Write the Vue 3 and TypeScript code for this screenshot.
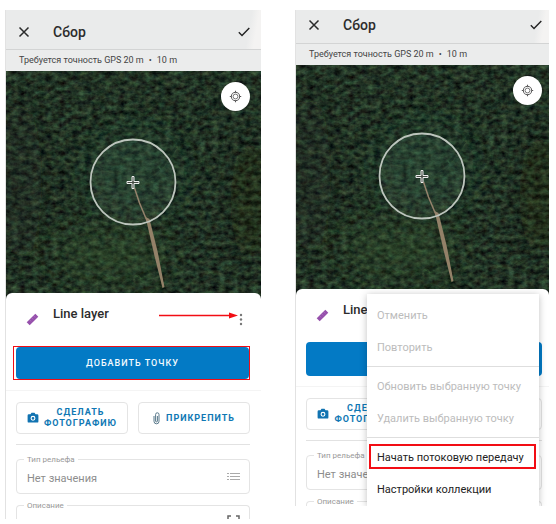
<script setup lang="ts">
interface MenuItem {
  text: string
  disabled?: boolean
  marked?: boolean
}
interface Screen {
  id: string
  hint: boolean
  menu: MenuItem[][]
}

const screens: Screen[] = [
  { id: 'add', hint: true, menu: [] },
  {
    id: 'stream',
    hint: false,
    menu: [
      [
        { text: 'Отменить', disabled: true },
        { text: 'Повторить', disabled: true },
      ],
      [
        { text: 'Обновить выбранную точку', disabled: true },
        { text: 'Удалить выбранную точку', disabled: true },
      ],
      [{ text: 'Начать потоковую передачу', marked: true }, { text: 'Настройки коллекции' }],
    ],
  },
]
</script>

<template>
  <main class="page">
    <section v-for="s in screens" :key="s.id" class="phone" :class="s.id">
      <header class="bar">
        <button class="icon-btn" type="button" aria-label="Закрыть">
          <svg width="12" height="12" viewBox="0 0 12 12"><path d="M1.500 1.500l9 9M10.500 1.500l-9 9" stroke="#2b2b2b" stroke-width="1.500" fill="none" /></svg>
        </button>
        <h1>Сбор</h1>
        <button class="icon-btn done" type="button" aria-label="Готово">
          <svg width="12" height="10" viewBox="0 0 12 10"><path d="M0.800 5.300l3.200 3.200L11.300 0.900" stroke="#222" stroke-width="1.400" fill="none" /></svg>
        </button>
      </header>
      <p class="gps"><span>Требуется точность GPS 20 m</span><span>•</span><span>10 m</span></p>

      <div class="map">
        <svg class="terrain" viewBox="0 0 256 232" preserveAspectRatio="xMidYMin slice" aria-hidden="true">
          <defs>
            <filter :id="'forest-' + s.id" x="0" y="0" width="100%" height="100%" color-interpolation-filters="sRGB">
              <feTurbulence type="fractalNoise" baseFrequency="0.15 0.2" numOctaves="3" seed="11" result="n" />
              <feColorMatrix
                in="n"
                type="matrix"
                values="0.300 0.100 0 0 -0.070
                        0.450 0 0 0 -0.030
                        0.280 0 0.060 0 -0.030
                        0 0 0 0 1"
              />
            </filter>
            <filter :id="'soft-' + s.id" x="-50%" y="-50%" width="200%" height="200%"><feGaussianBlur stdDeviation="12" /></filter>
            <filter :id="'edge-' + s.id"><feGaussianBlur stdDeviation="0.5" /></filter>
          </defs>
          <rect width="256" height="232" fill="#1f3826" />
          <rect width="256" height="232" :filter="`url(#forest-${s.id})`" />
          <g :filter="`url(#soft-${s.id})`">
            <ellipse cx="105" cy="185" rx="60" ry="30" fill="#3f642b" opacity="0.25" />
            <ellipse cx="15" cy="110" rx="22" ry="80" fill="#231c16" opacity="0.25" />
            <ellipse cx="245" cy="130" rx="20" ry="60" fill="#241c14" opacity="0.25" />
            <ellipse cx="130" cy="100" rx="50" ry="45" fill="#245237" opacity="0.25" />
          </g>
          <path d="M141 107l16-12 10-14 14-18 10-15 25-22 26-10M120 214l25-14 22-3" :filter="`url(#edge-${s.id})`" fill="none" stroke="#0c1d17" stroke-width="2.500" stroke-dasharray="9 2 5 1" opacity="0.5" />
          <g :filter="`url(#edge-${s.id})`">
            <path d="M129 117l5 15 8 19" fill="none" stroke="#917e67" stroke-width="1.500" />
            <path d="M140 146l4 2 8 32 7 36-2 1-8-32z" fill="#938168" />
          </g>
          <circle cx="127.500" cy="111" r="42.500" fill="#fff" fill-opacity="0.03" stroke="#bdc5bd" stroke-width="1.800" />
          <path d="M126.500 105.500h2v5h5v2h-5v5h-2v-5h-5v-2h5z" fill="#454b44" stroke="#eee" stroke-width="1" />
        </svg>
        <button class="locate" type="button" aria-label="Моё местоположение">
          <svg width="13" height="13" viewBox="0 0 13 13" fill="none" stroke="#555">
            <circle cx="6.500" cy="6.500" r="4.100" stroke-width="1" />
            <circle cx="6.500" cy="6.500" r="2.400" stroke-width="0.800" />
            <path d="M6.500 0.800v1.600M6.500 10.600v1.600M0.800 6.500h1.600M10.600 6.500h1.600" stroke-width="1.100" />
          </svg>
        </button>
      </div>

      <div class="sheet">
        <div class="layer">
          <svg class="ruler" width="13" height="13" viewBox="0 0 13 13"><path d="M2.200 10.800l8.600-8.600" stroke="#9650ac" stroke-width="4.200" /><path d="M4 7.200l1.100 1.100M6 5.200l1.100 1.100M8 3.200l1.100 1.100" stroke="#b781c7" stroke-width="0.700" /></svg>
          <h2>Line layer</h2>
          <svg v-if="s.hint" class="arrow" width="79" height="7" viewBox="0 0 79 7"><path d="M0 3.500h73" stroke="#f20d14" stroke-width="1.300" /><path d="M70 0.500l9 3-9 3z" fill="#f20d14" /></svg>
          <button class="icon-btn kebab" type="button" aria-label="Меню">
            <svg width="4" height="13" viewBox="0 0 4 13" fill="#777"><circle cx="2" cy="2" r="1.200" /><circle cx="2" cy="6.500" r="1.200" /><circle cx="2" cy="11" r="1.200" /></svg>
          </button>
        </div>

        <div class="primary-wrap" :class="{ outlined: s.hint }">
          <button class="primary" type="button">ДОБАВИТЬ ТОЧКУ</button>
        </div>

        <div class="actions">
          <button class="action" type="button">
            <svg width="12" height="12" viewBox="0 0 12 12"><path d="M1.800 2.200h1.700l1-1.400h3l1 1.400h1.700q1.200 0 1.200 1.200v6q0 1.200-1.200 1.200H1.800q-1.200 0-1.200-1.200v-6q0-1.200 1.200-1.200z" fill="#1173b1" /><circle cx="6" cy="6.300" r="1.900" fill="#1173b1" stroke="#fff" stroke-width="1.100" /></svg>
            <span>СДЕЛАТЬ<br />ФОТОГРАФИЮ</span>
          </button>
          <button class="action clip" type="button">
            <svg width="7" height="13" viewBox="0 0 7 13" fill="none" stroke="#58788a" stroke-width="1"><path d="M1 4v5.300a2.500 2.500 0 0 0 5 0V2.500a1.700 1.700 0 0 0-3.400 0V9a.9.9 0 0 0 1.800 0V4" /></svg>
            <span>ПРИКРЕПИТЬ</span>
          </button>
        </div>

        <form class="fields" @submit.prevent>
          <fieldset class="field">
            <legend><label :for="'relief-' + s.id">Тип рельефа</label></legend>
            <select :id="'relief-' + s.id"><option>Нет значения</option></select>
            <svg class="list" width="13" height="9" viewBox="0 0 13 9" stroke="#aaa" stroke-width="1"><path d="M0 1.500h2M3 1.500h10M0 4.500h2M3 4.500h10M0 7.500h2M3 7.500h10" /></svg>
          </fieldset>
          <fieldset class="field cut">
            <legend><label :for="'note-' + s.id">Описание</label></legend>
            <input :id="'note-' + s.id" type="text" />
            <svg width="13" height="13" viewBox="0 0 13 13" fill="none" stroke="#666" stroke-width="1.500"><path d="M1 5V1h3M9 1h3v4M1 8v4h3M9 12h3V8" /></svg>
          </fieldset>
        </form>
      </div>

      <div v-if="s.menu.length" class="menu" role="menu">
        <div v-for="(group, i) in s.menu" :key="i" class="group">
          <button v-for="m in group" :key="m.text" type="button" role="menuitem" :disabled="m.disabled" :class="{ marked: m.marked }">{{ m.text }}</button>
        </div>
      </div>
    </section>
  </main>
</template>

<style>
body {
  background: #fff;
}
</style>

<style scoped>
.page {
  display: grid;
  grid-template-columns: 256fr 254fr;
  align-items: start;
  gap: 34px;
  padding: 10px 7px 5px 5px;
  font-family: Roboto, "Liberation Sans", sans-serif;
  color: #2c2c2c;
}
.page *,
.page *::before {
  box-sizing: border-box;
}
button {
  padding: 0;
  border: 0;
  background: none;
  font: inherit;
  color: inherit;
}
svg {
  display: block;
  flex: none;
}
h1,
h2,
p {
  margin: 0;
}
.phone {
  --edge: 11px;
  position: relative;
  min-width: 0;
  overflow: hidden;
  border-left: 1px solid #e2e2e2;
}
.phone.stream {
  --edge: 7px;
}
.bar {
  display: flex;
  align-items: center;
  height: 40px;
  padding: 4px var(--edge) 0 12px;
  border-bottom: 1px solid #d3d4d4;
  background: linear-gradient(100deg, #eaebeb 0 94%, #f4f3f2 97%);
}
.stream .bar {
  height: 34px;
  padding-top: 0;
  padding-bottom: 3px;
}
.icon-btn {
  display: flex;
  align-items: center;
}
.bar h1 {
  margin-left: 23px;
  font-size: 14px;
  font-weight: 500;
  line-height: 20px;
}
.done {
  margin-left: auto;
}
.gps {
  display: flex;
  gap: 5px;
  height: 21px;
  padding-left: 13px;
  background: #ebecec;
  color: #444;
  font-size: 9px;
  line-height: 21px;
  white-space: nowrap;
}
.map {
  position: relative;
  height: 232px;
}
.terrain {
  width: 100%;
  height: 100%;
}
.locate {
  position: absolute;
  top: 11px;
  right: var(--edge);
  display: grid;
  place-items: center;
  width: 29px;
  height: 29px;
  border-radius: 50%;
  background: #fff;
}
.sheet {
  position: relative;
  margin-top: -10px;
  border-radius: 6px 6px 0 0;
  background: #fff;
}
.stream .sheet {
  margin-top: -8px;
}
.layer {
  display: flex;
  align-items: center;
  height: 53px;
  padding: 0 18px 0 20px;
}
.layer h2 {
  margin-left: 14px;
  padding-bottom: 12px;
  font-size: 13px;
  font-weight: 500;
  line-height: 20px;
  white-space: nowrap;
}
.arrow {
  margin-left: auto;
  margin-bottom: 8px;
}
.kebab {
  margin-left: auto;
}
.arrow + .kebab {
  margin-left: 1px;
}
.primary-wrap {
  margin: 0 var(--edge) 0 10px;
}
.primary-wrap.outlined {
  margin-left: 7px;
  padding-left: 2px;
  border: 1px solid #f20d14;
}
.primary {
  display: block;
  width: 100%;
  height: 34px;
  border-radius: 4px;
  background: #037ac5;
  color: #f4fbff;
  font-size: 9px;
  font-weight: 500;
  letter-spacing: 1px;
}
.outlined .primary {
  height: 32px;
}
.actions {
  display: flex;
  gap: 10px;
  margin-top: 10px;
  padding: 11px var(--edge) 10px 10px;
  border-top: 1px solid #f4f4f4;
}
.action {
  display: flex;
  flex: 1 1 0;
  align-items: center;
  justify-content: center;
  gap: 5px;
  min-width: 0;
  height: 32px;
  border: 1px solid #e4e4e4;
  border-radius: 4px;
  color: #0f78b4;
  font-size: 9px;
  font-weight: 700;
  letter-spacing: 1px;
  line-height: 11px;
}
.clip {
  gap: 6px;
}
.fields {
  margin: 0 var(--edge) 0 10px;
  padding-top: 10px;
  border-top: 1px solid #e2e2e2;
}
.field {
  display: flex;
  align-items: center;
  min-width: 0;
  height: 39px;
  margin: 0 0 7px;
  padding: 0 9px 0 10px;
  border: 1px solid #e4e4e4;
  border-radius: 4px;
}
.field legend {
  height: 9px;
  margin-left: -3px;
  padding: 0 3px;
  color: #999;
  font-size: 8px;
  line-height: 9px;
}
.field label {
  display: block;
}
.field select,
.field input {
  flex: 1;
  min-width: 0;
  height: 20px;
  padding: 0;
  border: 0;
  appearance: none;
  background: none;
  color: #8d8d8d;
  font: 11px/20px Roboto, sans-serif;
}
.field .list {
  margin-bottom: 4px;
}
.field.cut {
  align-items: flex-start;
  height: 18px;
  margin-bottom: 0;
  padding: 5px 9px 0 10px;
  border-bottom: 0;
  border-radius: 4px 4px 0 0;
  overflow: hidden;
}
.stream .field.cut {
  height: 9px;
  padding-top: 0;
}
.stream .field.cut input,
.stream .field.cut svg {
  display: none;
}
.menu {
  position: absolute;
  top: 284px;
  right: 10px;
  bottom: 0;
  width: 172px;
  padding-top: 5px;
  background: #fff;
  box-shadow: 0 1px 7px rgb(0 0 0 / 25%);
}
.group + .group {
  margin-top: 3px;
  padding-top: 3px;
  border-top: 1px solid #dedede;
}
.menu button {
  position: relative;
  display: block;
  width: 100%;
  height: 32px;
  padding-left: 10px;
  color: #222;
  font-size: 11px;
  text-align: left;
  white-space: nowrap;
}
.menu button:disabled {
  color: #bcbcbc;
}
.marked::before {
  content: "";
  position: absolute;
  inset: 3px 3px 4px 2px;
  border: 2px solid #f20d14;
}
</style>
